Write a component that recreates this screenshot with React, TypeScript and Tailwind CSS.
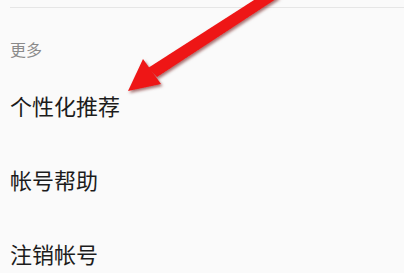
const items = ["个性化推荐", "帐号帮助", "注销帐号"]

export default function App() {
  return (
    <div
      className="relative h-[273px] w-[404px] overflow-hidden bg-[#fafafa]"
      style={{ fontFamily: '"Noto Sans CJK SC", "Noto Sans", sans-serif' }}
    >
      <div className="pt-[7px]">
        <div className="ml-[10px] h-px bg-[#e6e6e6]" />
      </div>

      <div className="h-[60px] pl-[10px] pt-[33px]">
        <p className="text-[16px] leading-4 text-[#8a8a8a]">更多</p>
      </div>

      <ul>
        {items.map((item) => (
          <li key={item} className="flex h-[74px] items-center pl-[10px]">
            <span className="text-[22px] leading-[22px] text-[#1c1c1c]">
              {item}
            </span>
          </li>
        ))}
      </ul>

      {/* red annotation arrow */}
      <svg
        className="pointer-events-none absolute inset-0"
        width="404"
        height="273"
        viewBox="0 0 404 273"
      >
        <defs>
          <filter id="arrow-shadow" x="-20%" y="-20%" width="140%" height="140%">
            <feDropShadow dx="1.5" dy="2" stdDeviation="1.6" floodColor="#600000" floodOpacity="0.55" />
          </filter>
        </defs>
        <g filter="url(#arrow-shadow)" fill="#ee1515">
          <polygon points="265,-7 279,-3 157,77 148,68" />
          <polygon points="128,91 143,59 161,84" />
        </g>
      </svg>
    </div>
  )
}
